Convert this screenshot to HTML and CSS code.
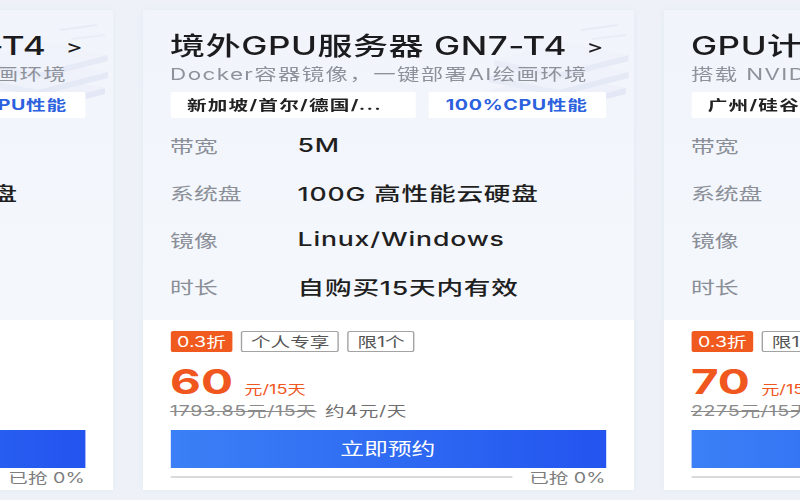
FILE: index.html
```html
<!DOCTYPE html>
<html lang="zh-CN">
<head>
<meta charset="utf-8">
<title>GPU服务器</title>
<link rel="stylesheet" href="styles.css">
</head>
<body>
<div class="stage">
  <div class="row">
    <!-- left card (cut) -->
    <div class="card">
      <div class="card-top">
        <svg class="decor" viewBox="0 0 120 105" aria-hidden="true">
          <polygon points="14,78 64,60 116,74 66,92" fill="#eceff9"/>
          <polygon points="14,78 66,92 66,98 14,84" fill="#e2e6f5"/>
          <polygon points="66,92 116,74 116,80 66,98" fill="#dbe0f3"/>
          <polygon points="18,62 68,44 118,58 68,76" fill="#eef1fa"/>
          <polygon points="18,62 68,76 68,82 18,68" fill="#e3e7f6"/>
          <polygon points="68,76 118,58 118,64 68,82" fill="#dde2f4"/>
          <polygon points="22,46 72,28 118,41 68,59" fill="#f0f2fb"/>
          <polygon points="22,46 68,59 68,65 22,52" fill="#e5e8f6"/>
          <polygon points="68,59 118,41 118,47 68,65" fill="#dfe3f4"/>
          <line x1="84" y1="16" x2="110" y2="11" stroke="#e3e6f2" stroke-width="2"/>
          <line x1="92" y1="25" x2="116" y2="21" stroke="#e6e9f4" stroke-width="2"/>
        </svg>
        <div class="title">境外GPU服务器 GN7-T4<span class="chev">&gt;</span></div>
        <div class="subtitle">Docker容器镜像，一键部署AI绘画环境</div>
        <div class="tags">
          <span class="tag tag-region">新加坡/首尔/德国/...</span>
          <span class="tag tag-blue">100%CPU性能</span>
        </div>
        <div class="specs">
          <div class="spec"><span class="spec-label">带宽</span><span class="spec-value">5M</span></div>
          <div class="spec"><span class="spec-label">系统盘</span><span class="spec-value">100G 高性能云硬盘</span></div>
          <div class="spec"><span class="spec-label">镜像</span><span class="spec-value">Linux/Windows</span></div>
          <div class="spec"><span class="spec-label">时长</span><span class="spec-value">自购买15天内有效</span></div>
        </div>
      </div>
      <div class="card-bottom">
        <div class="badges">
          <span class="badge badge-hot">0.3折</span>
          <span class="badge">个人专享</span>
          <span class="badge">限1个</span>
        </div>
        <div class="price"><span class="price-num">60</span><span class="price-unit">元/15天</span></div>
        <div class="orig"><span class="strike">1793.85元/15天</span><span class="per-day">约4元/天</span></div>
        <div class="btn">立即预约</div>
        <div class="progress"><span class="bar"></span><span class="sold">已抢 0%</span></div>
      </div>
    </div>

    <!-- middle card -->
    <div class="card">
      <div class="card-top">
        <svg class="decor" viewBox="0 0 120 105" aria-hidden="true">
          <polygon points="14,78 64,60 116,74 66,92" fill="#eceff9"/>
          <polygon points="14,78 66,92 66,98 14,84" fill="#e2e6f5"/>
          <polygon points="66,92 116,74 116,80 66,98" fill="#dbe0f3"/>
          <polygon points="18,62 68,44 118,58 68,76" fill="#eef1fa"/>
          <polygon points="18,62 68,76 68,82 18,68" fill="#e3e7f6"/>
          <polygon points="68,76 118,58 118,64 68,82" fill="#dde2f4"/>
          <polygon points="22,46 72,28 118,41 68,59" fill="#f0f2fb"/>
          <polygon points="22,46 68,59 68,65 22,52" fill="#e5e8f6"/>
          <polygon points="68,59 118,41 118,47 68,65" fill="#dfe3f4"/>
          <line x1="84" y1="16" x2="110" y2="11" stroke="#e3e6f2" stroke-width="2"/>
          <line x1="92" y1="25" x2="116" y2="21" stroke="#e6e9f4" stroke-width="2"/>
        </svg>
        <div class="title">境外GPU服务器 GN7-T4<span class="chev">&gt;</span></div>
        <div class="subtitle">Docker容器镜像，一键部署AI绘画环境</div>
        <div class="tags">
          <span class="tag tag-region">新加坡/首尔/德国/...</span>
          <span class="tag tag-blue">100%CPU性能</span>
        </div>
        <div class="specs">
          <div class="spec"><span class="spec-label">带宽</span><span class="spec-value">5M</span></div>
          <div class="spec"><span class="spec-label">系统盘</span><span class="spec-value">100G 高性能云硬盘</span></div>
          <div class="spec"><span class="spec-label">镜像</span><span class="spec-value">Linux/Windows</span></div>
          <div class="spec"><span class="spec-label">时长</span><span class="spec-value">自购买15天内有效</span></div>
        </div>
      </div>
      <div class="card-bottom">
        <div class="badges">
          <span class="badge badge-hot">0.3折</span>
          <span class="badge">个人专享</span>
          <span class="badge">限1个</span>
        </div>
        <div class="price"><span class="price-num">60</span><span class="price-unit">元/15天</span></div>
        <div class="orig"><span class="strike">1793.85元/15天</span><span class="per-day">约4元/天</span></div>
        <div class="btn">立即预约</div>
        <div class="progress"><span class="bar"></span><span class="sold">已抢 0%</span></div>
      </div>
    </div>

    <!-- right card (cut) -->
    <div class="card">
      <div class="card-top">
        <div class="title">GPU计算型 GN7-T4<span class="chev">&gt;</span></div>
        <div class="subtitle">搭载 NVIDIA T4，一键部署AI绘画环境</div>
        <div class="tags">
          <span class="tag tag-region">广州/硅谷/北京/...</span>
          <span class="tag tag-blue">100%CPU性能</span>
        </div>
        <div class="specs">
          <div class="spec"><span class="spec-label">带宽</span><span class="spec-value">5M</span></div>
          <div class="spec"><span class="spec-label">系统盘</span><span class="spec-value">100G 高性能云硬盘</span></div>
          <div class="spec"><span class="spec-label">镜像</span><span class="spec-value">Linux/Windows</span></div>
          <div class="spec"><span class="spec-label">时长</span><span class="spec-value">自购买15天内有效</span></div>
        </div>
      </div>
      <div class="card-bottom">
        <div class="badges">
          <span class="badge badge-hot">0.3折</span>
          <span class="badge">限1个</span>
        </div>
        <div class="price"><span class="price-num">70</span><span class="price-unit">元/15天</span></div>
        <div class="orig"><span class="strike">2275元/15天</span><span class="per-day">约5元/天</span></div>
        <div class="btn">立即预约</div>
        <div class="progress"><span class="bar"></span><span class="sold">已抢 0%</span></div>
      </div>
    </div>
  </div>
</div>
</body>
</html>
```
FILE: styles.css
```css
html, body {
  margin: 0;
  padding: 0;
}
body {
  width: 800px;
  height: 500px;
  overflow: hidden;
  background: #eef2f8;
  font-family: Inter, "Noto Sans CJK SC", sans-serif;
  color: #1f1f1f;
}
.stage {
  width: 572px;
  padding-top: 10px;
  transform: scaleX(1.4);
  transform-origin: 0 0;
}
.row {
  display: flex;
  gap: 21px;
  margin-left: -270.5px;
}
.card {
  flex: 0 0 351px;
  height: 480px;
  display: flex;
  flex-direction: column;
  overflow: hidden;
  box-shadow: 0 0 5px rgba(205, 214, 232, 0.35);
}
.card-top {
  position: relative;
  height: 310px;
  box-sizing: border-box;
  padding: 20px 20px 0;
  background: linear-gradient(180deg, #f1f4fa 0%, #f4f7fc 100%);
}
.decor {
  position: absolute;
  top: 4px;
  right: 2px;
  width: 120px;
  height: 105px;
  opacity: 0.6;
}
.title {
  position: relative;
  font-size: 25px;
  line-height: 32px;
  font-weight: 500;
  letter-spacing: 0.4px;
  color: #1c1c1e;
  white-space: nowrap;
}
.chev {
  margin-left: 14px;
  font-size: 18px;
  font-weight: 500;
  vertical-align: 2px;
}
.subtitle {
  position: relative;
  font-size: 16px;
  line-height: 22px;
  letter-spacing: 1px;
  color: #8d919a;
  white-space: nowrap;
}
.tags {
  position: relative;
  display: flex;
  gap: 9px;
  margin-top: 7px;
}
.tag {
  height: 26px;
  line-height: 26px;
  background: #fff;
  font-size: 14px;
  font-weight: 700;
  border-radius: 2px;
  white-space: nowrap;
}
.tag-region {
  width: 175px;
  flex: 0 0 175px;
  box-sizing: border-box;
  padding: 0 8px 0 12px;
  overflow: hidden;
  letter-spacing: 0.9px;
  color: #222;
}
.tag-blue {
  flex: 1;
  text-align: center;
  letter-spacing: 0.5px;
  color: #2c61de;
}
.specs {
  margin-top: 4px;
}
.spec {
  display: flex;
  align-items: center;
  height: 47px;
  white-space: nowrap;
}
.spec-label {
  flex: 0 0 91px;
  font-size: 17px;
  color: #8a8e97;
}
.spec-value {
  font-size: 19px;
  font-weight: 500;
  letter-spacing: 0.6px;
  color: #1f1f1f;
}
.card-bottom {
  flex: 1;
  background: #fff;
  padding: 11px 20px 0;
}
.badges {
  display: flex;
  gap: 6px;
  height: 21px;
}
.badge {
  box-sizing: border-box;
  height: 21px;
  line-height: 19px;
  padding: 0 6px;
  font-size: 14px;
  color: #555;
  background: #fff;
  border: 1px solid #a3a3a3;
  border-radius: 2px;
  white-space: nowrap;
}
.badge-hot {
  padding: 0 4px;
  color: #fff;
  background: #f05a1e;
  border-color: #f05a1e;
}
.price {
  display: flex;
  align-items: baseline;
  margin-top: 10px;
  height: 40px;
  color: #f0571f;
  white-space: nowrap;
}
.price-num {
  font-size: 34px;
  line-height: 40px;
  font-weight: 700;
}
.price-unit {
  margin-left: 8px;
  font-size: 13px;
}
.orig {
  font-size: 14px;
  line-height: 18px;
  letter-spacing: 0.5px;
  color: #8a8a8a;
  white-space: nowrap;
}
.strike {
  text-decoration: line-through;
}
.per-day {
  margin-left: 6px;
  color: #6e6e6e;
}
.btn {
  margin-top: 10px;
  height: 38px;
  line-height: 38px;
  text-align: center;
  font-size: 17px;
  color: #fff;
  background: linear-gradient(90deg, #3b80f6 0%, #2f6bf2 50%, #2354ef 100%);
}
.progress {
  display: flex;
  align-items: center;
  height: 18px;
}
.bar {
  flex: 1;
  height: 2px;
  background: #dadada;
}
.sold {
  margin-left: 12px;
  font-size: 14px;
  color: #7d7d7d;
  white-space: nowrap;
}
```
